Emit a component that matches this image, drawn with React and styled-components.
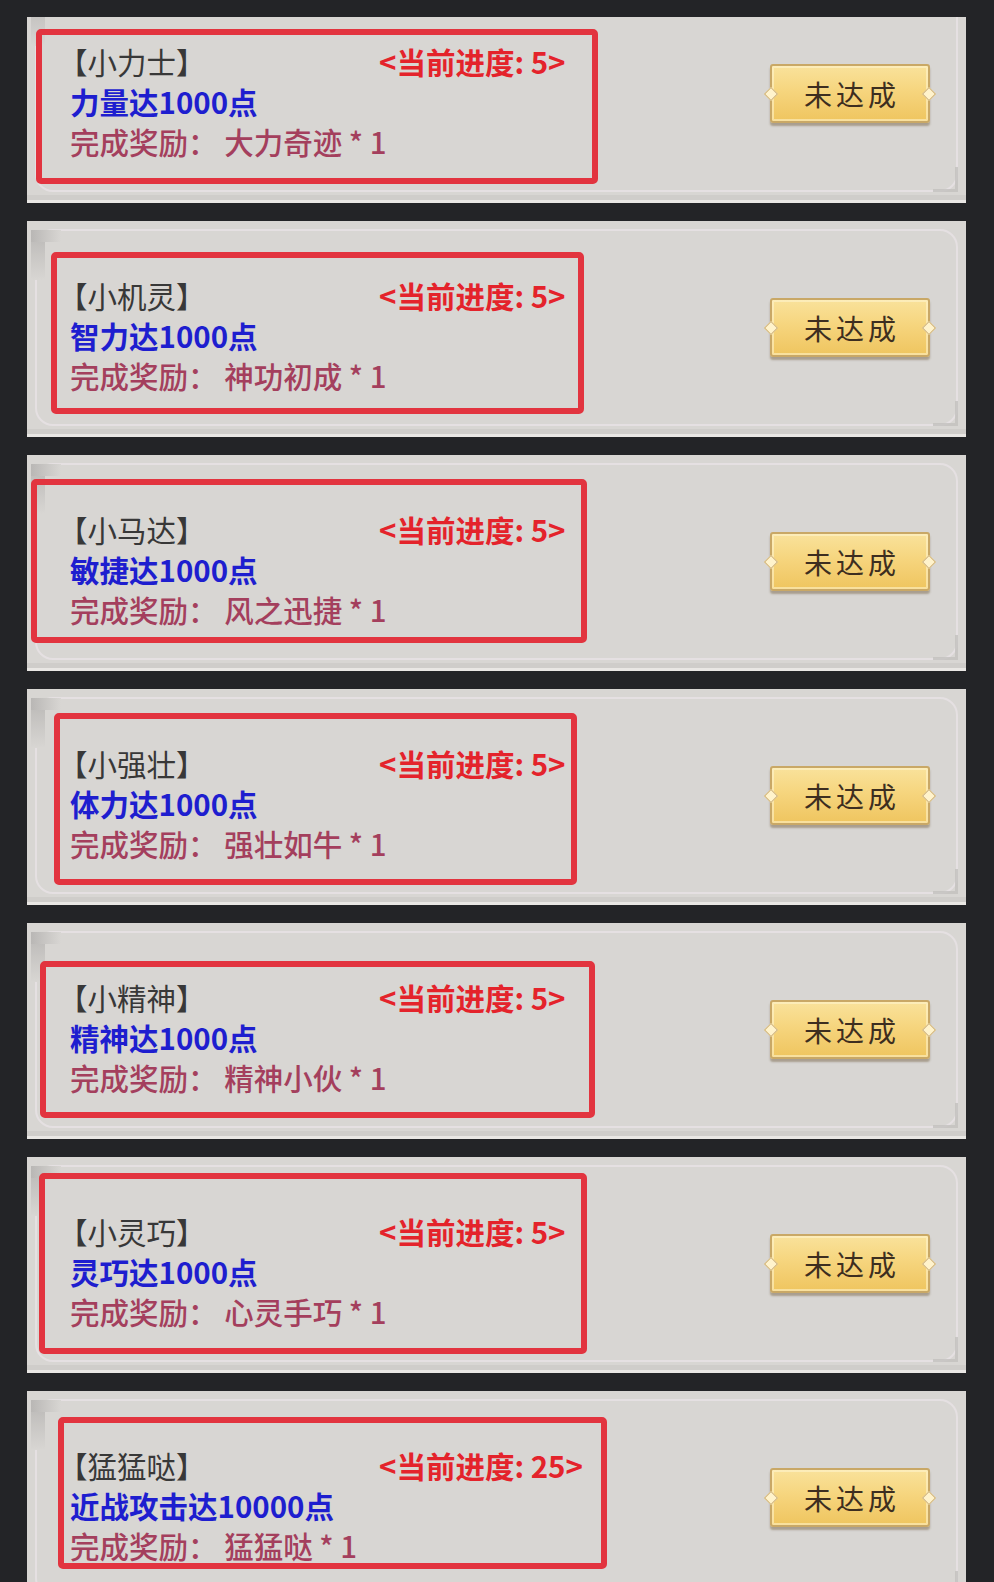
import React from 'react'
import styled, { createGlobalStyle } from 'styled-components'

const GlobalStyle = createGlobalStyle`
body {
  margin: 0;
  background-color: #232427;
  font-family: "Noto Sans CJK SC", "Noto Sans", sans-serif;
}
`

const Viewport = styled.div`
margin-top: 17px;
height: 1565px;
overflow: hidden;
`

const List = styled.div`
display: flex;
flex-direction: column;
gap: 18px;
margin-top: -30px;
padding: 0 28px 0 27px;
`

const Card = styled.div`
position: relative;
height: 216px;
box-sizing: border-box;
background-color: #d8d6d3;
border-bottom: 3px solid #e9e7e4;
box-shadow: inset 0 -5px 0 #cfcdca;
display: flex;
align-items: center;
justify-content: space-between;
padding: 0 36px 0 43px;

&::before {
  content: '';
  position: absolute;
  top: 8px;
  left: 8px;
  right: 8px;
  bottom: 8px;
  border: 2px solid #e5e0e2;
  border-radius: 18px;
}
`

const CornerTopLeft = styled.div`
position: absolute;
top: 9px;
left: 4px;
width: 14px;
height: 50px;
background: linear-gradient(#b9b7b5, #d8d6d3);
&::after {
  content: '';
  position: absolute;
  top: 0;
  left: 0;
  width: 30px;
  height: 12px;
  background: linear-gradient(90deg, #b9b7b5, #d8d6d3);
}
`

const CornerBottomRight = styled.div`
position: absolute;
right: 8px;
bottom: 8px;
width: 22px;
height: 22px;
border-right: 3px solid #c3c1bf;
border-bottom: 3px solid #c3c1bf;
opacity: 0.8;
`

const Info = styled.div`
width: 520px;
margin-top: 14px;
display: flex;
flex-direction: column;
font-size: 29.5px;
line-height: 40px;
position: relative;
z-index: 1;
`

const TitleRow = styled.div`
display: grid;
grid-template-columns: 309px auto;
`

const Name = styled.span`
color: #383838;
margin-left: -12px;
`

const Progress = styled.span`
color: #e4232b;
font-weight: 700;
`

const Goal = styled.div`
color: #1e1ecf;
font-weight: 700;
`

const Reward = styled.div`
color: #a43f5d;
font-weight: 500;
`

const Highlight = styled.div`
position: absolute;
left: ${p => p.$left}px;
top: ${p => p.$top}px;
width: ${p => p.$width}px;
height: ${p => p.$height}px;
box-sizing: border-box;
border: 6px solid #e2343f;
border-radius: 5px;
z-index: 2;
`

const StatusButton = styled.button`
position: relative;
width: 160px;
height: 59px;
box-sizing: border-box;
border: 2px solid #c9a866;
border-radius: 3px;
background: linear-gradient(180deg, #f9e29b 0%, #f6d57e 45%, #efc55f 100%);
box-shadow: 0 3px 2px rgba(110, 90, 60, 0.45), inset 0 0 0 2px rgba(255, 245, 210, 0.55);
color: #3d2e20;
font-family: "Noto Sans CJK SC", sans-serif;
font-weight: 400;
font-size: 28px;
letter-spacing: 4px;
padding: 0 0 0 4px;

&::before, &::after {
  content: '';
  position: absolute;
  top: 50%;
  width: 8px;
  height: 8px;
  margin-top: -5px;
  background: #fff3cc;
  border: 1px solid #cfb27a;
  transform: rotate(45deg);
}
&::before { left: -6px; }
&::after { right: -6px; }
`

const tasks = [
  { name: '小力士', goal: '力量达1000点', reward: '大力奇迹', progress: 5, box: [9, 42, 562, 155] },
  { name: '小机灵', goal: '智力达1000点', reward: '神功初成', progress: 5, box: [24, 31, 533, 162] },
  { name: '小马达', goal: '敏捷达1000点', reward: '风之迅捷', progress: 5, box: [4, 24, 556, 164] },
  { name: '小强壮', goal: '体力达1000点', reward: '强壮如牛', progress: 5, box: [27, 24, 523, 172] },
  { name: '小精神', goal: '精神达1000点', reward: '精神小伙', progress: 5, box: [13, 38, 555, 157] },
  { name: '小灵巧', goal: '灵巧达1000点', reward: '心灵手巧', progress: 5, box: [12, 16, 548, 181] },
  { name: '猛猛哒', goal: '近战攻击达10000点', reward: '猛猛哒', progress: 25, box: [31, 26, 549, 152] },
]

const TaskCard = ({ task }) => {
  const [left, top, width, height] = task.box
  return (
    <Card>
      <CornerTopLeft />
      <CornerBottomRight />
      <Info>
        <TitleRow>
          <Name>【{task.name}】</Name>
          <Progress>&lt;当前进度: {task.progress}&gt;</Progress>
        </TitleRow>
        <Goal>{task.goal}</Goal>
        <Reward>完成奖励：&nbsp;{task.reward} * 1</Reward>
      </Info>
      <StatusButton>未达成</StatusButton>
      <Highlight $left={left} $top={top} $width={width} $height={height} />
    </Card>
  )
}

export default function App() {
  return (
    <>
      <GlobalStyle />
      <Viewport>
        <List>
          {tasks.map(t => <TaskCard key={t.name} task={t} />)}
        </List>
      </Viewport>
    </>
  )
}
